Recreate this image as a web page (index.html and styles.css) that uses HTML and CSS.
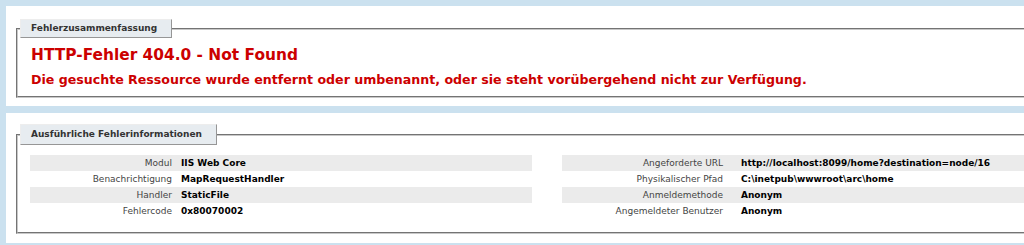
FILE: index.html
```html
<!DOCTYPE html>
<html lang="de">

<head>
    <meta charset="UTF-8">
    <title>IIS 8.5 Detailed Error - 404.0 - Not Found</title>
    <link rel="stylesheet" href="styles.css">
</head>

<body>

    <div class="content">

        <!-- Fehlerzusammenfassung -->
        <div class="summary-container">
            <fieldset class="summary">
                <legend>Fehlerzusammenfassung</legend>
                <h2>HTTP-Fehler 404.0 - Not Found</h2>
                <h3>Die gesuchte Ressource wurde entfernt oder umbenannt, oder sie steht vorübergehend nicht zur Verfügung.</h3>
            </fieldset>
        </div>

        <!-- Ausführliche Fehlerinformationen -->
        <div class="content-container">
            <fieldset class="details">
                <legend>Ausführliche Fehlerinformationen</legend>
                <div class="details-grid">
                    <table class="details-left">
                        <tr class="alt"><th>Modul</th><td>IIS Web Core</td></tr>
                        <tr><th>Benachrichtigung</th><td>MapRequestHandler</td></tr>
                        <tr class="alt"><th>Handler</th><td>StaticFile</td></tr>
                        <tr><th>Fehlercode</th><td>0x80070002</td></tr>
                    </table>
                    <table class="details-right">
                        <tr class="alt"><th>Angeforderte URL</th><td>http://localhost:8099/home?destination=node/16</td></tr>
                        <tr><th>Physikalischer Pfad</th><td>C:\inetpub\wwwroot\arc\home</td></tr>
                        <tr class="alt"><th>Anmeldemethode</th><td>Anonym</td></tr>
                        <tr><th>Angemeldeter Benutzer</th><td>Anonym</td></tr>
                    </table>
                </div>
            </fieldset>
        </div>

    </div>

</body>

</html>
```

FILE: styles.css
```css
body {
    margin: 0;
    font-size: 9px;
    font-family: "DejaVu Sans", Verdana, sans-serif;
    background: #cbe1ef;
    overflow: hidden;
}

.content {
    padding: 6px 0 0 6px;
}

.summary-container,
.content-container {
    background: #fff;
    margin-right: -40px;
    padding: 13px 10px 8px 10px;
}

.content-container {
    margin-top: 7px;
    padding-top: 11px;
    padding-bottom: 9px;
}

fieldset {
    margin: 0;
    padding: 0 12px 7px 12px;
    border: 2px groove #c8c8c8;
}

legend {
    color: #333;
    padding: 2px 14px 3px 10px;
    margin-left: -10px;
    border-top: 1px solid #ededed;
    border-left: 1px solid #ededed;
    border-right: 1px solid #969696;
    border-bottom: 1px solid #969696;
    background: #e7ecf0;
    font-weight: bold;
    line-height: 12px;
}

.details legend {
    padding: 3px 14px 4px 10px;
}

h2 {
    font-size: 15.4px;
    margin: 7px 0 0 1px;
    color: #cc0000;
    line-height: 20px;
}

h3 {
    font-size: 12.6px;
    margin: 6px 0 0 1px;
    color: #cc0000;
    line-height: 18px;
}

.details-grid {
    display: grid;
    grid-template-columns: 502px 1fr;
    gap: 30px;
    margin-top: 10px;
    padding-bottom: 6px;
}

table {
    width: 100%;
    border-collapse: collapse;
}

th,
td {
    box-sizing: border-box;
    height: 16px;
    padding: 0;
    text-align: left;
    vertical-align: middle;
    line-height: 16px;
    white-space: nowrap;
}

th {
    font-weight: normal;
    color: #444;
    text-align: right;
    padding-right: 9px;
}

td {
    font-weight: bold;
    color: #000;
}

.details-left th {
    width: 151px;
}

.details-right th {
    width: 170px;
}

.details-right td {
    padding-left: 9px;
}

tr.alt th,
tr.alt td {
    background: #ebebeb;
}
```
